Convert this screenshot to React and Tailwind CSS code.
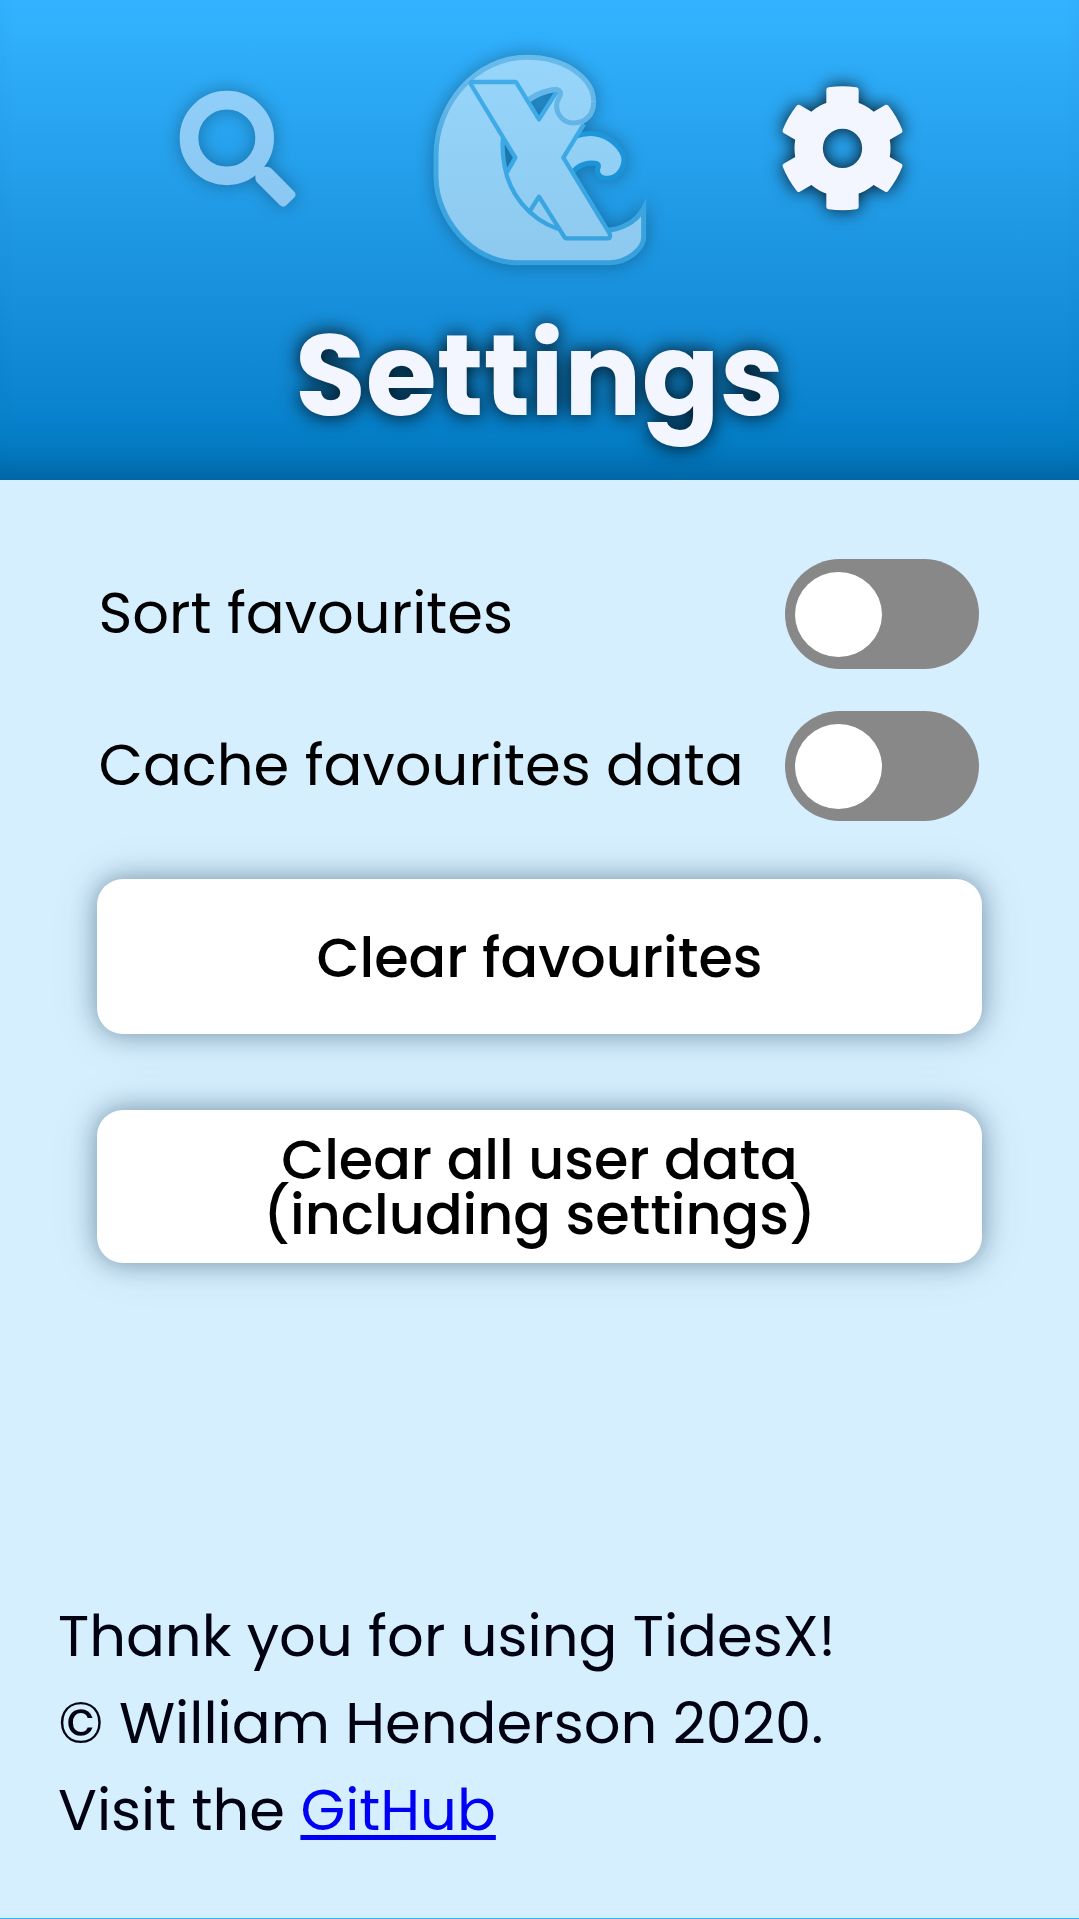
function SearchIcon() {
  return (
    <svg viewBox="0 0 480 450" className="mt-10 h-[150px] w-[160px] overflow-visible opacity-50 drop-shadow-[0_0_9px_rgba(0,0,0,0.6)]">
      <circle cx="200.5" cy="204" r="113.5" fill="none" stroke="#f3f5ff" strokeWidth="56" />
      <path d="M287 290H320Q329 290 335 296L401 363Q412 374 402 383L380 405Q370 415 359 405L293 339Q286 332 286 325Z" fill="#f3f5ff" />
    </svg>
  );
}

function GearIcon() {
  const tooth = 'M199 135V59Q199 53 206 52Q247 46 289 52Q296 53 296 59V135Z';
  return (
    <svg viewBox="0 0 480 450" fill="#f3f5ff" className="mt-10 h-[150px] w-[160px] overflow-visible drop-shadow-[0_0_9px_rgba(0,0,0,0.85)]">
      <circle cx="247.5" cy="235" r="101.5" fill="none" stroke="#f3f5ff" strokeWidth="85" />
      {[0, 60, 120, 180, 240, 300].map((angle) => (
        <path key={angle} d={tooth} transform={`rotate(${angle} 247.5 235)`} />
      ))}
    </svg>
  );
}

function Logo() {
  return (
    <svg viewBox="0 0 780 750" strokeLinejoin="round" className="h-[250px] w-[260px] overflow-visible opacity-50 drop-shadow-[0_0_9px_rgba(0,0,0,0.6)]">
      <defs>
        <linearGradient id="rim" gradientUnits="userSpaceOnUse" x1="0" y1="75" x2="0" y2="705">
          <stop offset="0" stopColor="#a1cae0" />
          <stop offset="0.25" stopColor="#9bc4dc" />
          <stop offset="0.45" stopColor="#5fb4de" />
          <stop offset="1" stopColor="#51addc" />
        </linearGradient>
      </defs>
      <path
        d="M440 345C500 310 530 308 552 311C600 315 642 360 642 390C640 425 616 445 592 445C568 445 558 430 565 410C567 400 556 399 545 399C515 400 500 412 485 430L440 400Z"
        fill="#fff" stroke="#148ac8" strokeWidth="15"
      />
      <path
        d="M351 82C465 82 551 145 551 215C551 255 525 279 492 279C453 279 427 240 447 203C458 187 447 177 430 179C395 184 370 195 350 218L281 315C274 350 278 385 284 410C300 500 365 570 440 596C510 611 600 612 650 584C676 571 693 550 701 533V622C701 655 655 697 600 698H315C185 694 78 565 78 440V375C78 225 195 82 351 82Z"
        fill="#fff"
      />
      <path
        d="M345 218C370 193 395 184 430 179C447 177 458 187 447 203C427 240 453 279 492 279C525 279 551 255 551 215C551 145 465 82 351 82C195 82 78 225 78 375V440C78 565 185 694 315 698H600C655 697 701 655 701 622V535C693 550 676 571 650 584C630 595 612 600 590 601"
        fill="none" stroke="url(#rim)" strokeWidth="15" strokeLinejoin="miter" strokeMiterlimit="8"
      />
      <path d="M387 500L362 540Q392 575 442 596Z" fill="#fff" />
      <path
        d="M182 156H318L387 268L437 190L480 205L522 282L460 383L601 613Q602 625 594 625H467L442 596Q340 555 287 432L316 383Z"
        fill="#fff"
      />
      <path
        d="M288 432L316 383L182 162Q181 156 186 156H316Q319 156 321 161L387 268L439 187M522 282L460 383L599 611Q603 625 594 625H470Q465 625 462 619L387 500L360 543M444 597C355 565 298 490 284 410Q275 360 279 325"
        fill="none" stroke="#54b0de" strokeWidth="13"
      />
      <path d="M430 179C447 177 458 187 447 203C427 240 453 279 492 279C525 279 551 255 551 215Z" fill="#fff" />
      <path d="M358 210C382 192 400 184 430 179C447 177 458 187 447 203C427 240 453 279 492 279C525 279 551 255 551 215" fill="none" stroke="#9cc5dd" strokeWidth="15" />
    </svg>
  );
}

function SettingToggle({ children }) {
  return (
    <div className="flex h-[110px] items-center justify-between pl-[1.5px]">
      <span className="-mt-px whitespace-nowrap">{children}</span>
      <button className="flex h-[110px] w-[194px] items-center rounded-full bg-[#888888] pl-[10px]">
        <span className="h-[85px] w-[87px] rounded-[50%] bg-white" />
      </button>
    </div>
  );
}

const buttonStyle =
  'flex items-center justify-center rounded-[26px] bg-white text-center text-[55.6px] font-medium leading-[55px] shadow-[0_0_48px_rgba(0,80,75,0.15),0_0_24px_rgba(0,25,60,0.38)]';

export default function App() {
  return (
    <div className="h-[1919px] w-[1079px] overflow-hidden border-b border-[#32b2f2] bg-[#d6efff] font-[Poppins,Inter,sans-serif] text-[57.55px] text-black">
      <header className="h-[480px] bg-linear-to-b from-[#33b3ff] to-[#007bc5] pt-[30px] shadow-[inset_0_-50px_50px_-44px_rgba(0,50,80,0.45)]">
        <nav className="flex gap-[90px] pl-[160px]">
          <SearchIcon />
          <Logo />
          <GearIcon />
        </nav>
        <h1 className="mt-[35px] text-center text-[115.1px] leading-[120px] font-bold text-[#f3f5ff] [text-shadow:0_0_20px_rgba(0,0,0,0.95)]">
          Settings
        </h1>
      </header>

      <main className="flex h-[1113px] flex-col pt-[79px] pr-[97px] pl-[97px]">
        <div className="flex flex-col gap-[42px] pr-[3px]">
          <SettingToggle>Sort favourites</SettingToggle>
          <SettingToggle>Cache favourites data</SettingToggle>
        </div>
        <button className={`${buttonStyle} mt-[58px] h-[155px] pt-[2px]`}>Clear favourites</button>
        <button className={`${buttonStyle} mt-[76px] h-[153px]`}>
          Clear all user data
          <br />
          (including settings)
        </button>
      </main>

      <footer className="pl-[58px] leading-[87px] text-[#000212]">
        <p>Thank you for using TidesX!</p>
        <p>© William Henderson 2020.</p>
        <p>
          Visit the{' '}
          <a href="#" className="text-[#0000f4] underline decoration-[5px] underline-offset-[5px]">GitHub</a>
        </p>
      </footer>
    </div>
  );
}
